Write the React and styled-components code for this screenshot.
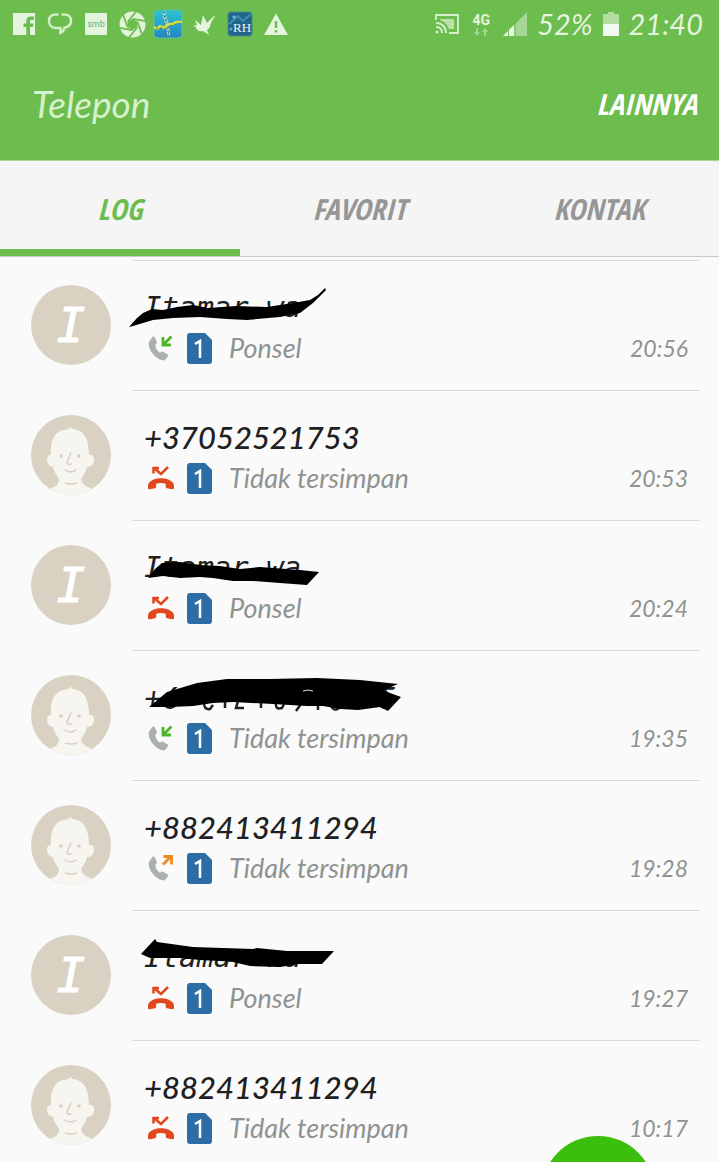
import React, { useState } from 'react';
import styled, { createGlobalStyle } from 'styled-components';

const GlobalStyle = createGlobalStyle`
  * { box-sizing: border-box; }
  html, body { margin: 0; padding: 0; }
  body { background: #fafafa; font-family: Lato, 'Liberation Sans', sans-serif; font-style: italic; }
  button { font: inherit; color: inherit; background: none; border: 0; padding: 0; cursor: pointer; }
`;

const Screen = styled.div`
  height: 100vh;
  display: flex;
  flex-direction: column;
  overflow: hidden;
  background: #fafafa;
`;

const TopArea = styled.header`
  background: #6cbd4d;
  border-bottom: 1px solid #a9d496;
`;

const StatusBar = styled.div`
  height: 48px;
  display: flex;
  align-items: center;
  justify-content: space-between;
  padding: 0 16px 0 6px;
  color: #e4f4de;
`;

const Notifications = styled.div`
  display: flex;
`;

const Slot = styled.span`
  width: 36px;
  height: 32px;
  display: flex;
  align-items: center;
  justify-content: center;
`;

const SystemInfo = styled.div`
  display: flex;
  align-items: center;
  gap: 10px;
`;

const Network = styled.span`
  display: flex;
  flex-direction: column;
  align-items: center;
  width: 24px;
  font: normal 700 14px/16px Roboto, sans-serif;
`;

const StatusText = styled.span`
  font-size: 29px;
  line-height: 40px;
  white-space: nowrap;
`;

const TitleBar = styled.div`
  height: 112px;
  padding: 0 22px 0 32px;
  display: flex;
  align-items: center;
  justify-content: space-between;
`;

const Title = styled.h1`
  margin: 0;
  font-size: 37px;
  line-height: 40px;
  font-weight: 400;
  color: #d7f0cd;
`;

const capsFont = `'Liberation Sans Narrow', 'Open Sans Condensed', Lato, sans-serif`;

const MoreButton = styled.button`
  && { font-family: ${capsFont}; font-weight: 300; }
  font-size: 29px;
  line-height: 40px;
  color: #fff;
`;

const Tabs = styled.nav`
  display: grid;
  grid-template-columns: repeat(3, 1fr);
  height: 96px;
  flex-shrink: 0;
  background: #f5f5f5;
  border-bottom: 1px solid #c8c8c8;
`;

const Tab = styled.button`
  && { font-family: ${capsFont}; font-weight: 300; padding-top: 6px; }
  font-size: 29px;
  color: ${(p) => (p.$active ? '#6cbd4d' : '#969696')};
  border-bottom: 7px solid ${(p) => (p.$active ? '#6cbd4d' : 'transparent')};
`;

const LogList = styled.ul`
  list-style: none;
  margin: 0;
  padding: 3px 19px 0 31px;
  flex: 1;
  min-height: 0;
  overflow: hidden;
`;

const Row = styled.li`
  display: flex;
  gap: 21px;
  height: 130px;
`;

const Avatar = styled.div`
  width: 80px;
  height: 80px;
  margin-top: 25px;
  flex-shrink: 0;
  border-radius: 50%;
  overflow: hidden;
  display: flex;
  align-items: center;
  justify-content: center;
  background: #d9d2c3;
  color: #fff;
  font: italic 400 48px/80px 'DejaVu Sans Mono', monospace;
  -webkit-text-stroke: 1px currentColor;
`;

const Entry = styled.div`
  flex: 1;
  min-width: 0;
  border-top: 1px solid #d9d9d9;
  padding: 25px 12px 0;
`;

const Name = styled.div`
  position: relative;
  height: 42px;
  font-family: ${(p) => (p.$contact ? "'DejaVu Sans Mono', monospace" : 'inherit')};
  font-size: ${(p) => (p.$contact ? '29px' : '31px')};
  font-weight: 500;
  line-height: 42px;
  color: #202020;
  white-space: nowrap;
`;

const HiddenGap = styled.span`
  display: inline-block;
  width: 200px;
`;

const Scribble = styled.svg`
  position: absolute;
  left: -16px;
  top: 0;
  overflow: visible;
`;

const Detail = styled.div`
  display: flex;
  align-items: center;
  height: 40px;
  padding-left: 3px;
  color: #8f9290;
`;

const Label = styled.span`
  flex: 1;
  padding-left: 17px;
  font-size: 27px;
  line-height: 40px;
`;

const Time = styled.time`
  font-size: 23px;
  line-height: 40px;
`;

const SimBadge = styled.svg`
  margin-left: 12px;
`;

const DialButton = styled.button`
  && { background: #3bbf0d; }
  position: fixed;
  right: 64px;
  bottom: -88px;
  width: 114px;
  height: 114px;
  border-radius: 50%;
`;

const FacebookIcon = () => (
  <svg width="24" height="24" viewBox="0 0 24 24">
    <path fill="#e4f4de" d="M1 1h22v22h-5v-8h3l.5-3.500H18V9.500c0-1.200.5-1.700 1.700-1.700H22V4.500h-3.300C15.800 4.500 14.300 6 14.300 9v2.500H11.500V15h2.800v8H1z" />
  </svg>
);

const BubbleIcon = () => (
  <svg width="26" height="24" viewBox="0 0 26 24" fill="none" stroke="#d3edc8" strokeWidth="2.500">
    <path d="M11.500 2.500H9C4.500 2.500 2 5 2 9s2.500 7 7 7h4.500v5c2-1 3.500-3 4-5.300 4-.7 6.500-3.200 6.500-6.700 0-4-2.500-6.500-7-6.500h-2.500" />
  </svg>
);

const SmbIcon = () => (
  <svg width="24" height="24" viewBox="0 0 24 24">
    <rect x="1" y="1" width="22" height="22" rx="1" fill="#e4f4de" />
    <text x="12" y="15" textAnchor="middle" fontFamily="Roboto, sans-serif" fontSize="9" fontWeight="400" fontStyle="normal" fill="#51b482">smb</text>
  </svg>
);

const ApertureIcon = () => (
  <svg width="27" height="27" viewBox="0 0 27 27">
    <circle cx="13.500" cy="13.500" r="13" fill="#e0f3d9" />
    <polygon points="13.500,8 18.300,10.800 18.300,16.200 13.500,19 8.700,16.200 8.700,10.800" fill="#6cbd4d" />
    <g stroke="#6cbd4d" strokeWidth="1.800">
      {[0, 60, 120, 180, 240, 300].map((a) => (
        <path key={a} d="M8.700 10.800L17.500 0" transform={`rotate(${a} 13.500 13.500)`} />
      ))}
    </g>
  </svg>
);

const SurfIcon = () => (
  <svg width="30" height="30" viewBox="0 0 30 30">
    <defs>
      <linearGradient id="sea" x1="0" y1="0" x2="0" y2="1">
        <stop offset="0" stopColor="#2cc4d2" />
        <stop offset="1" stopColor="#2583c0" />
      </linearGradient>
    </defs>
    <rect x="1" y="1" width="28" height="28" rx="4" fill="url(#sea)" stroke="#63c1a0" />
    <path d="M11 3l1 6 2 5 1 6 1 7" stroke="#d5dfd2" strokeWidth="3" fill="none" strokeDasharray="3 1" />
    <path d="M11 3l1 6 2 5 1 6 1 7" stroke="#315d6c" strokeWidth="1.200" fill="none" strokeDasharray="2 2" />
    <path d="M1 18l3 2 3-3 4 2 4-4 5 0 3-2 6 0" stroke="#d7df38" strokeWidth="2.500" fill="none" />
    <path d="M3 20l5-1 5 1 4-3 10-3" stroke="#41804c" strokeWidth="1" fill="none" strokeDasharray="2 2" />
  </svg>
);

const BirdIcon = () => (
  <svg width="24" height="24" viewBox="0 0 24 24">
    <path fill="#e4f4de" d="M3 8l6 5 2-10 4 8 8-8c-1 4-3 5-4 8-1 4-2 6-4 7l2 5-6-4c-4 1-7-1-7-4l-3-1 4-1z" />
  </svg>
);

const RhIcon = () => (
  <svg width="26" height="26" viewBox="0 0 26 26">
    <rect x="1" y="1" width="24" height="24" rx="3" fill="#22658a" stroke="#3f8d80" />
    <path d="M2 13l9-8 5 5 8-7" stroke="#3c8fb5" strokeWidth="2" fill="none" />
    <circle cx="7" cy="6" r="1.500" fill="#79bed6" />
    <circle cx="4" cy="18" r="1.500" fill="#62aaca" />
    <text x="15" y="21" textAnchor="middle" fontFamily="'Liberation Serif', serif" fontSize="13" fontStyle="normal" fill="#f2f8fb">RH</text>
  </svg>
);

const WarningIcon = () => (
  <svg width="26" height="24" viewBox="0 0 26 24">
    <path d="M13 1.500L25 23H1z" fill="#e4f4de" />
    <path d="M13 9v7M13 18v2.500" stroke="#6cbd4d" strokeWidth="2.500" />
  </svg>
);

const CastIcon = () => (
  <svg width="24" height="20" viewBox="0 0 24 20" fill="none" stroke="#d9f0d0" strokeWidth="1.800">
    <path d="M1 6V1h22v18h-9" />
    <path d="M5 5h14v10h-5C12 10 9 7 5 6z" fill="#bce2ac" stroke="none" />
    <path d="M1 9c6 0 10 4 10 10M1 13c4 0 6 2 6 6" />
    <circle cx="2" cy="18" r="1.500" fill="#d9f0d0" stroke="none" />
  </svg>
);

const SignalIcon = () => (
  <svg width="24" height="24" viewBox="0 0 24 24">
    <path d="M24 0v24H0z" fill="#a6d794" />
    <path d="M0 24l5-5v5zM6 18l5-5v11H6z" fill="#e9f6e4" />
    <path d="M5.500 15v9M12 9v15" stroke="#6cbd4d" />
  </svg>
);

const DataArrows = () => (
  <svg width="16" height="8" viewBox="0 0 16 8" fill="#a4d791">
    <path d="M3 0h2v4h2L4 8 1 4h2zM12 0l3 4h-2v4h-2V4H9z" />
  </svg>
);

const BatteryIcon = () => (
  <svg width="16" height="24" viewBox="0 0 16 24">
    <path d="M5 0h6v2h5v10H0V2h5z" fill="#b2dda2" />
    <path d="M0 12h16v12H0z" fill="#f2faef" />
  </svg>
);

const PersonFace = () => (
  <svg width="80" height="80" viewBox="0 0 80 80">
    <path
      fill="#f6f5ef"
      d="M20 40C19 22 26 15 36 14.500c2-1 3-2.500 5-2.500l-.5 2C52 14 58 23 58 40c3-1 5 1 5 4.500 0 5-3 7.500-7 7.500-1 5-4 9-6 12 1 5 5 8 10 9v7H20v-7c5-1 8-4 8-9-2-3-5-7-6-12-3 0-6-3-6-7.500 0-3.500 2-5 4-4.500z"
    />
    <path d="M34 68q6 2 12 0" stroke="#d9d2c3" strokeWidth="1.500" fill="none" />
    <path d="M40 38l-4 9q0 3 4 2M34 55q6 4 11 0" stroke="#d6d0c3" strokeWidth="1.500" fill="none" strokeLinecap="round" />
    <circle cx="30" cy="41" r="1.800" fill="#d6d0c3" />
    <circle cx="48" cy="41" r="1.800" fill="#d6d0c3" />
  </svg>
);

const Handset = () => (
  <path
    d="M1 6.500L4.500 2c1-.7 2-.4 2.500.7l1.800 4c.4 1-.1 1.700-1.300 2.600-.5 3 1.500 6.500 4.500 8.400 1.500-1.200 2.300-1.400 3.300-.8l4 2.300c1 .6 1.200 1.300.5 2.200l-3.200 4C9 25.500-1 15 1 6.500z"
    fill="#a9b0ae"
  />
);

const CallIcon = ({ type }) => (
  <svg width="28" height="28" viewBox="0 0 28 28" role="img" aria-label={type}>
    {type === 'missed' ? (
      <g fill="none" stroke="#e2481f">
        <path d="M7 4l7 6 7-7M6.500 9.500V4H12" strokeWidth="2.500" />
        <path d="M1 24v-3c2-9 24-9 26 0v3c0 1-1 1.500-2 1.200l-5-1c-1-.3-1.300-1-1.300-2v-2.500c-3-1-6.500-1-9.500 0v2.500c0 1-.3 1.700-1.300 2l-5 1C2 25.500 1 25 1 24z" fill="#e2481f" stroke="none" />
      </g>
    ) : (
      <g transform="translate(1 1)">
        <Handset />
        {type === 'incoming' ? (
          <path d="M23.500 1.500l-8 8M15 2v8h8" stroke="#4cb32b" strokeWidth="2.800" fill="none" />
        ) : (
          <path d="M15 9.500l8-8M15.500 1.500h8v8" stroke="#f08a1c" strokeWidth="2.800" fill="none" />
        )}
      </g>
    )}
  </svg>
);

const Sim = () => (
  <SimBadge width="25" height="31" viewBox="0 0 25 31" role="img" aria-label="SIM 1">
    <path d="M3 0h15l7 7v21a3 3 0 0 1-3 3H3a3 3 0 0 1-3-3V3a3 3 0 0 1 3-3z" fill="#2d6da6" />
    <path d="M8 11l5-3v17" stroke="#fff" strokeWidth="2.500" fill="none" />
  </SimBadge>
);

const scribbles = {
  sweep: 'M1 41L9 32 15 27 24 23 35 24 49 21 65 19 80 22 108 20 139 21 165 17 182 14 190 9 197 2 198 4 185 17 172 27 152 31 119 34 99 33 72 31 45 32 25 34 5 40z',
  bar: 'M20 32L27 23 34 17 52 16 72 19 92 20 112 23 132 21 172 24 191 26 179 39 152 37 125 35 105 35 85 32 72 31 52 32 35 30z',
  block: 'M21 31L39 16 69 7 99 3 142 3 189 2 232 4 270 8 256 14 262 17 273 21 260 35 252 31 230 34 212 33 195 30 179 30 145 28 105 26 85 27 65 30 42 31z',
  wedge: 'M13 18L27 3 29 6 65 11 95 12 125 13 129 12 159 15 206 15 194 28 170 28 152 31 122 30 105 26 92 25 72 24 52 22 22 22z',
};

const calls = [
  { name: 'Itamar wa', mark: 'sweep', type: 'incoming', label: 'Ponsel', time: '20:56', contact: true },
  { name: '+37052521753', type: 'missed', label: 'Tidak tersimpan', time: '20:53' },
  { name: 'Itamar wa', mark: 'bar', type: 'missed', label: 'Ponsel', time: '20:24', contact: true },
  { name: '+6', tail: '5', mark: 'block', type: 'incoming', label: 'Tidak tersimpan', time: '19:35' },
  { name: '+882413411294', type: 'outgoing', label: 'Tidak tersimpan', time: '19:28' },
  { name: 'Itamar wa', mark: 'wedge', type: 'missed', label: 'Ponsel', time: '19:27', contact: true },
  { name: '+882413411294', type: 'missed', label: 'Tidak tersimpan', time: '10:17' },
];

const notificationIcons = [FacebookIcon, BubbleIcon, SmbIcon, ApertureIcon, SurfIcon, BirdIcon, RhIcon, WarningIcon];

function CallRow({ call }) {
  return (
    <Row>
      <Avatar>{call.contact ? 'I' : <PersonFace />}</Avatar>
      <Entry>
        <Name $contact={call.contact}>
          {call.name}
          {call.tail && <><HiddenGap />{call.tail}</>}
          {call.mark && (
            <Scribble width="280" height="42" viewBox="0 0 280 42" aria-hidden="true">
              {call.mark === 'block' && (
                <path d="M76 27q0 7 6 6l3-4M97 25v7M110 25l-2 7h8M133 25v7M148 27q-1 7 6 5l2-4M173 28l-5 7M190 28v6M203 30q3 6 8 2" stroke="#202020" strokeWidth="2.500" fill="none" />
              )}
              <path d={scribbles[call.mark]} fill="#000" />
              {call.mark === 'block' && <path d="M175 15l5-1 5 1" stroke="#ddd" fill="none" />}
            </Scribble>
          )}
        </Name>
        <Detail>
          <CallIcon type={call.type} />
          <Sim />
          <Label>{call.label}</Label>
          <Time>{call.time}</Time>
        </Detail>
      </Entry>
    </Row>
  );
}

export default function App() {
  const [active, setActive] = useState('LOG');
  return (
    <Screen>
      <GlobalStyle />
      <TopArea>
        <StatusBar>
          <Notifications>
            {notificationIcons.map((Icon, i) => (
              <Slot key={i}><Icon /></Slot>
            ))}
          </Notifications>
          <SystemInfo>
            <CastIcon />
            <Network>4G<DataArrows /></Network>
            <SignalIcon />
            <StatusText>52%</StatusText>
            <BatteryIcon />
            <StatusText>21:40</StatusText>
          </SystemInfo>
        </StatusBar>
        <TitleBar>
          <Title>Telepon</Title>
          <MoreButton type="button">LAINNYA</MoreButton>
        </TitleBar>
      </TopArea>
      <Tabs>
        {['LOG', 'FAVORIT', 'KONTAK'].map((tab) => (
          <Tab key={tab} type="button" $active={tab === active} onClick={() => setActive(tab)}>{tab}</Tab>
        ))}
      </Tabs>
      <LogList>
        {calls.map((call, i) => <CallRow key={i} call={call} />)}
      </LogList>
      <DialButton type="button" aria-label="Papan tombol" />
    </Screen>
  );
}
